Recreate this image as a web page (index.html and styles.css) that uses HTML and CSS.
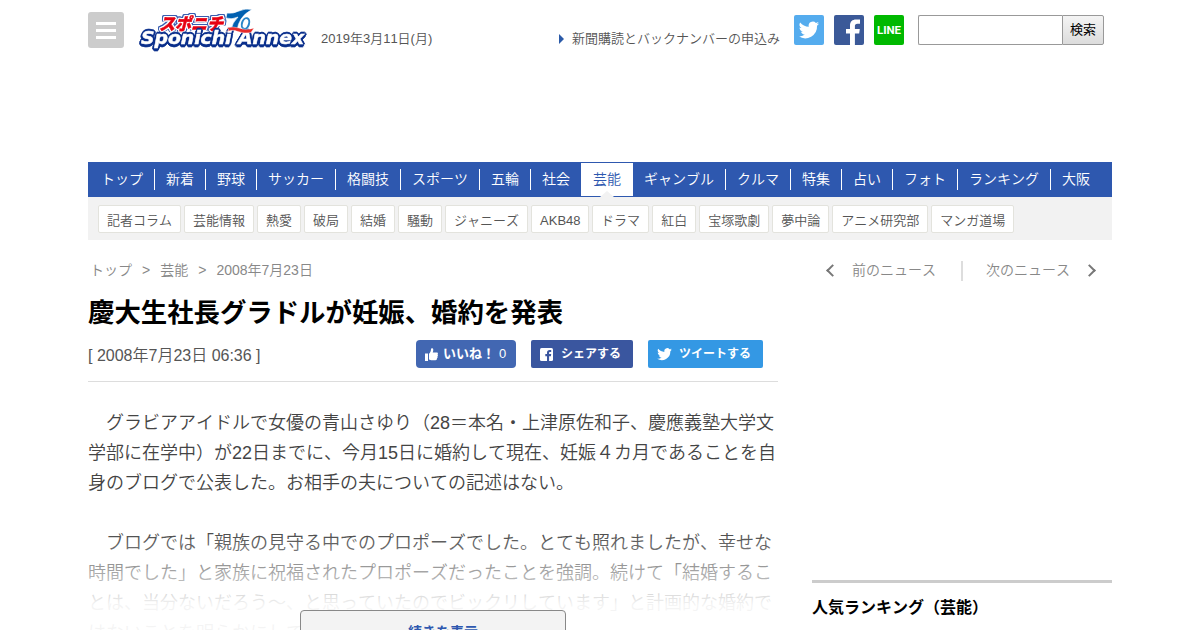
FILE: index.html
```html
<!DOCTYPE html>
<html lang="ja">
<head>
    <meta charset="UTF-8">
    <meta name="viewport" content="width=device-width, initial-scale=1.0">
    <title>慶大生社長グラドルが妊娠、婚約を発表 - スポニチ Sponichi Annex</title>
    <link rel="stylesheet" href="styles.css">
</head>
<body>
<div class="wrapper">

    <header class="header">
        <button class="menu-btn" aria-label="メニュー"><span></span><span></span><span></span></button>
        <a class="logo">
            <svg width="170" height="43" viewBox="0 0 170 43">
                <g class="logo-sub">
                    <text transform="translate(22 21.500) skewX(-14)" textLength="64" lengthAdjust="spacingAndGlyphs">スポニチ</text>
                </g>
                <g class="logo-main">
                    <text x="4" y="36" textLength="163" lengthAdjust="spacingAndGlyphs">Sponichi Annex</text>
                </g>
                <path d="M90 5 Q96 6 102 3 Q108 0 115 1.500 Q108 5 104 11 Q101 16 100 22 L94 22 Q95 15 101 9 Q95 12 89 10 Z" fill="#0060b0" stroke="#fff" stroke-width=".6"/>
                <ellipse cx="108.500" cy="15.500" rx="3.500" ry="5.500" transform="rotate(18 108.500 15.500)" fill="#fff" stroke="#2b86c8" stroke-width="2"/>
                <path d="M90 20 Q96 18 102 20 Q109 23 117 20 L114 24.500 Q107 26 101 23.500 Q95 21 89 24 L92 22 Z" fill="#e62a2a" stroke="#fff" stroke-width=".4"/>
            </svg>
        </a>
        <p class="date">2019年3月11日(月)</p>
        <a class="subscribe">新聞購読とバックナンバーの申込み</a>
        <ul class="sns">
            <li class="tw">
                <svg width="30" height="30" viewBox="0 0 30 30"><path transform="translate(4.5 4.3) scale(.87)" fill="#fff" d="M23.6 4.9c-.8.4-1.700.6-2.700.8 1-.6 1.700-1.500 2.100-2.600-.9.5-1.900.9-3 1.100a4.800 4.800 0 0 0-8.200 4.400C7.800 8.400 4.300 6.500 1.900 3.600a4.800 4.800 0 0 0 1.500 6.400c-.8 0-1.500-.2-2.200-.6 0 2.300 1.600 4.300 3.800 4.800-.7.2-1.400.2-2.100.1.600 1.900 2.400 3.300 4.500 3.300A9.600 9.600 0 0 1 .3 19.600a13.600 13.600 0 0 0 21-12.100c.9-.7 1.700-1.600 2.300-2.600z"/></svg>
            </li>
            <li class="fb">
                <svg width="30" height="30" viewBox="0 0 30 30"><path fill="#fff" d="M16 30V18.500h-4v-4.500h4v-3.500c0-4 2.400-6 6-6h4v4.200h-2.500c-2 0-2.600.9-2.600 2.400V14h4.900l-.6 4.500h-4.300V30z"/></svg>
            </li>
            <li class="line">LINE</li>
        </ul>
        <form class="search">
            <input type="text" class="search-text">
            <button type="button" class="search-btn">検索</button>
        </form>
    </header>

    <nav class="gnav">
        <ul>
            <li>トップ</li>
            <li>新着</li>
            <li>野球</li>
            <li>サッカー</li>
            <li>格闘技</li>
            <li>スポーツ</li>
            <li>五輪</li>
            <li class="last">社会</li>
            <li class="active">芸能</li>
            <li>ギャンブル</li>
            <li>クルマ</li>
            <li>特集</li>
            <li>占い</li>
            <li>フォト</li>
            <li>ランキング</li>
            <li class="last">大阪</li>
        </ul>
    </nav>
    <ul class="subnav">
        <li>記者コラム</li>
        <li>芸能情報</li>
        <li>熱愛</li>
        <li>破局</li>
        <li>結婚</li>
        <li>騒動</li>
        <li>ジャニーズ</li>
        <li class="latin">AKB48</li>
        <li>ドラマ</li>
        <li>紅白</li>
        <li>宝塚歌劇</li>
        <li>夢中論</li>
        <li>アニメ研究部</li>
        <li>マンガ道場</li>
    </ul>

    <div class="container">
        <main class="main">
            <ul class="breadcrumb">
                <li>トップ</li>
                <li>&gt;</li>
                <li>芸能</li>
                <li>&gt;</li>
                <li>2008年7月23日</li>
            </ul>
            <h1>慶大生社長グラドルが妊娠、婚約を発表</h1>
            <div class="article-info">
                <p class="time">[ 2008年7月23日 06:36 ]</p>
                <div class="share">
                    <a class="btn like">
                        <svg width="13" height="13" viewBox="0 0 13 13" fill="#fff"><path d="M0 5.500h3V13H0zM4 5.700C5.500 4.500 6 3 6 .8 6.300 0 8.200-.2 8.300 1.800c0 1.200-.3 2-.6 2.800h4c1.300 0 1.600 1.300.8 2 .7.600.5 1.500-.1 1.900.4.700.1 1.500-.5 1.800.3 1-.3 1.900-1.400 1.900H7c-1.300 0-2-.3-3-.7z"/></svg>
                        <b>いいね！</b><span>0</span>
                    </a>
                    <a class="btn fb-share">
                        <svg width="13" height="13" viewBox="0 0 13 13"><rect width="13" height="13" rx="1.500" fill="#fff"/><path fill="#3a569f" d="M7 13V8.200H5.300V6.100H7V4.700C7 2.900 8 2 9.600 2h1.600v2h-1.100c-.8 0-1 .4-1 1v1.100h2.100l-.3 2.100H9.100V13z"/></svg>
                        <b>シェアする</b>
                    </a>
                    <a class="btn tweet">
                        <svg width="15" height="14" viewBox="0 1.500 24 21"><path fill="#fff" d="M23.600 4.900c-.8.400-1.700.6-2.700.8 1-.6 1.700-1.500 2.100-2.600-.9.500-1.900.9-3 1.100a4.800 4.800 0 0 0-8.200 4.400C7.800 8.400 4.300 6.500 1.900 3.600a4.800 4.800 0 0 0 1.500 6.400c-.8 0-1.500-.2-2.200-.6 0 2.300 1.600 4.300 3.800 4.800-.7.200-1.400.2-2.100.1.600 1.900 2.400 3.300 4.500 3.300A9.600 9.600 0 0 1 .3 19.600a13.600 13.600 0 0 0 21-12.100c.9-.7 1.700-1.600 2.300-2.600z"/></svg>
                        <b>ツイートする</b>
                    </a>
                </div>
            </div>
            <div class="article">
                <p>　グラビアアイドルで女優の青山さゆり（28＝本名・上津原佐和子、慶應義塾大学文<br>学部に在学中）が22日までに、今月15日に婚約して現在、妊娠４カ月であることを自<br>身のブログで公表した。お相手の夫についての記述はない。</p>
                <p>　ブログでは「親族の見守る中でのプロポーズでした。とても照れましたが、幸せな<br>時間でした」と家族に祝福されたプロポーズだったことを強調。続けて「結婚するこ<br>とは、当分ないだろう～、と思っていたのでビックリしています」と計画的な婚約で<br>はないことを明らかにして</p>
                <div class="fade"></div>
                <a class="more">続きを表示</a>
            </div>
        </main>

        <aside class="side">
            <div class="pager">
                <span class="prev">前のニュース</span>
                <span class="next">次のニュース</span>
            </div>
            <h2>人気ランキング（芸能）</h2>
        </aside>
    </div>

</div>
</body>
</html>
```
FILE: styles.css
```css
* {
    box-sizing: border-box;
}
body {
    margin: 0;
    height: 630px;
    overflow: hidden;
    background-color: #fff;
    color: #444;
    font-family: "Liberation Sans", "Noto Sans CJK JP", sans-serif;
    font-size: 14px;
    font-weight: 350;
    font-kerning: none;
}
ul, p, h1, h2 {
    margin: 0;
    padding: 0;
    list-style: none;
}
.wrapper {
    width: 1024px;
    margin: 0 auto;
}

/* header */
.header {
    display: flex;
    align-items: flex-start;
    height: 162px;
    padding-top: 8px;
}
.menu-btn {
    display: flex;
    flex-direction: column;
    align-items: center;
    gap: 4px;
    width: 36px;
    height: 36px;
    margin: 4px 13px 0 0;
    padding: 10px 0 0;
    border: none;
    border-radius: 3px;
    background-color: #ccc;
}
.menu-btn span {
    width: 20px;
    height: 3px;
    background-color: #fff;
}
.logo {
    width: 170px;
    height: 43px;
}
.logo svg {
    display: block;
    overflow: visible;
}
.logo-main {
    fill: #fff;
    stroke: #fff;
    stroke-width: 0.5px;
    font: italic bold 18px "DejaVu Sans", sans-serif;
    filter: drop-shadow(1px 1px 0 #0a2f8c) drop-shadow(-1px -1px 0 #0a2f8c) drop-shadow(1px -1px 0 #0a2f8c) drop-shadow(-1px 2px 0 #0a2f8c);
}
.logo-sub {
    fill: #e60012;
    stroke: #e60012;
    stroke-width: 0.5px;
    font: 900 17px "Noto Sans CJK JP", sans-serif;
    filter: drop-shadow(1px 0 0 #fff) drop-shadow(-1px 0 0 #fff) drop-shadow(0 1px 0 #fff) drop-shadow(0 -1px 0 #fff) drop-shadow(1px 0 0 #3a5db0) drop-shadow(-1px 0 0 #3a5db0) drop-shadow(0 -1px 0 #3a5db0);
}
.date {
    margin: 21px 0 0 14px;
    font-size: 13px;
    line-height: 20px;
    color: #555;
}
.subscribe {
    display: flex;
    align-items: center;
    gap: 8px;
    margin: 21px 14px 0 auto;
    font-size: 13px;
    line-height: 20px;
    color: #555;
}
.subscribe::before {
    content: "";
    border: 5px solid transparent;
    border-left-color: #2b5aa8;
    border-right-width: 0;
}
.sns {
    display: flex;
    gap: 10px;
    margin-top: 7px;
}
.sns li {
    width: 30px;
    height: 30px;
    border-radius: 2px;
}
.sns svg {
    display: block;
}
.tw {
    background-color: #55acee;
}
.fb {
    background-color: #3b5998;
}
.line {
    background-color: #00b900;
    color: #fff;
    font: bold 11.5px/31px Roboto, sans-serif;
    text-align: center;
}
.search {
    display: flex;
    margin: 7px 8px 0 14px;
}
.search-text {
    width: 144px;
    height: 30px;
    border: 1px solid #999;
    border-right: none;
    border-radius: 2px 0 0 2px;
}
.search-btn {
    width: 42px;
    height: 30px;
    padding: 0;
    border: 1px solid #999;
    border-radius: 0 2px 2px 0;
    background: linear-gradient(#f4f4f4, #dcdcdc);
    color: #000;
    font: 13px/28px "Liberation Sans", "Noto Sans CJK JP", sans-serif;
}

/* navigation */
.gnav ul {
    display: flex;
    height: 35px;
    padding-left: 2px;
    background-color: #2e58af;
    color: #fff;
}
.gnav li {
    height: 21px;
    margin-top: 7px;
    padding: 0 11px;
    border-right: 1px solid #fff;
    line-height: 21px;
    white-space: nowrap;
}
.gnav .last {
    border-right: none;
}
.gnav .active {
    position: relative;
    height: 33px;
    margin-top: 1px;
    padding: 0 12px;
    border-right: none;
    background-color: #fff;
    color: #2e58af;
    line-height: 33px;
}
.gnav .active::after {
    content: "";
    position: absolute;
    left: 19px;
    bottom: -1px;
    border: 7px solid transparent;
    border-top-width: 0;
    border-bottom: 6px solid #f2f2f2;
}
.subnav {
    display: flex;
    gap: 3px;
    height: 43px;
    padding: 8px 10px 0;
    background-color: #f2f2f2;
}
.subnav li {
    height: 28px;
    padding: 0 8px;
    border: 1px solid #e3e3dd;
    border-radius: 2px;
    background-color: #fff;
    color: #555;
    font-size: 13px;
    line-height: 29px;
    white-space: nowrap;
}
.subnav .latin {
    width: 58px;
    font-kerning: normal;
}

/* contents */
.container {
    display: flex;
    justify-content: space-between;
}
.main {
    width: 690px;
}
.breadcrumb {
    display: flex;
    gap: 10px;
    padding: 20px 2px 0;
    color: #888;
    line-height: 20px;
}
h1 {
    margin-top: 13px;
    color: #000;
    font-size: 26.4px;
    line-height: 40px;
    white-space: nowrap;
}
.article-info {
    display: flex;
    justify-content: space-between;
    height: 49px;
    padding: 7px 15px 0 0;
    border-bottom: 1px solid #ddd;
}
.time {
    padding-top: 5px;
    color: #555;
    font-size: 16px;
    line-height: 22px;
}
.share {
    display: flex;
    gap: 15px;
}
.btn {
    display: flex;
    align-items: center;
    height: 28px;
    padding-left: 9px;
    border-radius: 2px;
    color: #fff;
    font-size: 13px;
    line-height: 28px;
    white-space: nowrap;
}
.like {
    width: 100px;
    gap: 5px;
    border-radius: 4px;
    background-color: #4267b2;
}
.like span {
    margin-left: -1px;
}
.btn b {
    font-weight: bold;
}
.fb-share {
    width: 102px;
    gap: 8px;
    background-color: #3a569f;
    font-size: 12px;
}
.tweet {
    width: 115px;
    gap: 7px;
    background-color: #3498e4;
    font-size: 12px;
}
.article {
    position: relative;
    height: 260px;
    padding-top: 26px;
    color: #444;
    font-size: 18px;
    line-height: 30px;
    white-space: nowrap;
}
.article p {
    margin-bottom: 30px;
}
.fade {
    position: absolute;
    left: 0;
    right: 0;
    top: 148px;
    height: 110px;
    background: linear-gradient(rgba(255, 255, 255, 0), rgba(255, 255, 255, 0.94) 75px);
}
.more {
    position: absolute;
    left: 212px;
    top: 228px;
    width: 266px;
    height: 44px;
    padding-left: 20px;
    border: 1px solid #888;
    border-radius: 4px;
    background-color: #f3f3f3;
    color: #2e58af;
    font-size: 14px;
    font-weight: bold;
    line-height: 42px;
    text-align: center;
}

/* side column */
.side {
    width: 300px;
}
.pager {
    display: flex;
    height: 340px;
    padding: 21px 16px 0 17px;
    color: #888;
    line-height: 18px;
    white-space: nowrap;
}
.pager span {
    display: flex;
    align-items: center;
    height: 20px;
    padding-bottom: 2px;
}
.prev::before, .next::after {
    content: "";
    width: 7px;
    height: 7px;
    border: solid #777;
    border-width: 2px 0 0 2px;
    transform: rotate(-45deg);
}
.prev {
    padding-right: 25px;
    border-right: 2px solid #ddd;
}
.prev::before {
    margin: 0 15px 0 1px;
}
.next {
    padding-left: 23px;
}
.next::after {
    margin-left: 15px;
    transform: rotate(135deg);
}
.pager .prev {
    margin-left: -2px;
}
.side h2 {
    padding-top: 13px;
    border-top: 3px solid #ccc;
    color: #000;
    font-size: 16px;
    line-height: 24px;
}
```
